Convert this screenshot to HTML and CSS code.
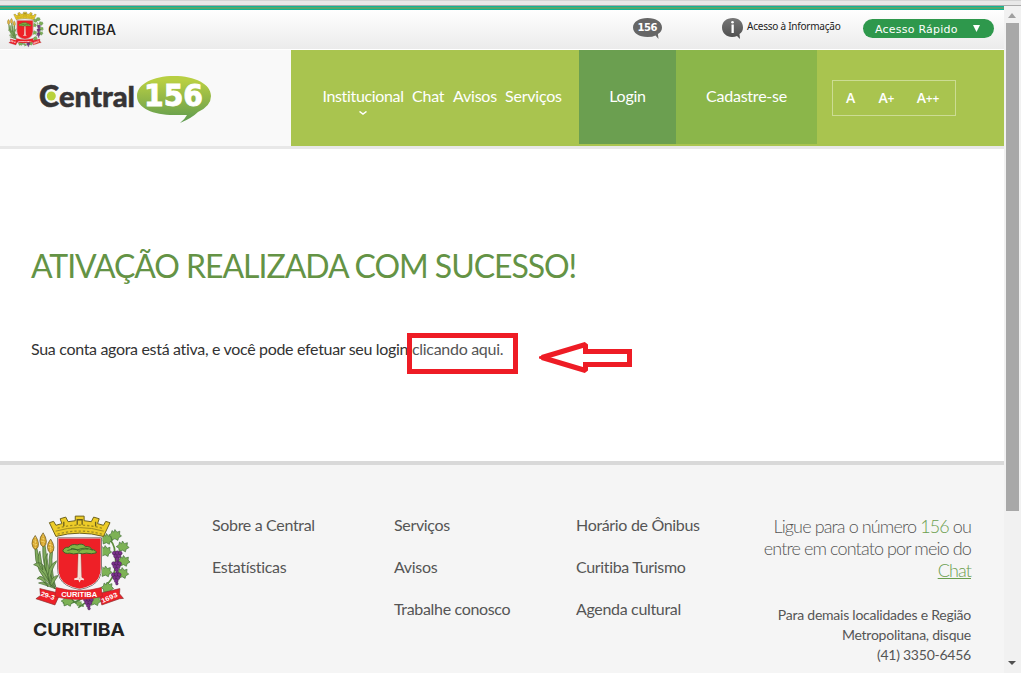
FILE: index.html
```html
<!DOCTYPE html>
<html lang="pt-BR">
<head>
<meta charset="utf-8">
<title>Central 156</title>
<link rel="stylesheet" href="styles.css">
</head>
<body>
<svg class="defs" width="0" height="0" aria-hidden="true">
  <defs>
    <g id="corn"><path d="M0-5Q-11 8-10 20Q-9 34 0 38Q11 34 10 20Q9 8 0-5Z" fill="#d5a42c" stroke="#62562b" stroke-width="2"/><path d="M0 0V34M-5 11L6 15M-7 20L7 24" stroke="#f5d977" stroke-width="3" stroke-dasharray="3 2"/></g>
    <path id="leaf" d="M0-17L6-9L15-12L14-3L20 3L11 8L9 16L0 11L-10 15L-11 5L-19 0L-11-5L-9-14L-3-9Z" fill="#7db255" stroke="#3f6c38" stroke-width="2"/>
    <g id="grapes" fill="#7b318c" stroke="#43204f" stroke-width="1.5"><circle cx="-9" cy="0" r="6"/><circle cx="0" cy="-1" r="6"/><circle cx="9" cy="0" r="6"/><circle cx="-5" cy="9" r="6"/><circle cx="5" cy="9" r="6"/><circle cx="0" cy="18" r="6"/><circle cx="2" cy="27" r="4"/></g>
    <symbol id="crest" viewBox="62 40 305 298">
      <g fill="#82ac5e" stroke="#42652f" stroke-width="2"><path d="M74 145Q71 220 135 268Q91 211 80 145ZM98 135Q93 210 136 267Q111 200 105 135ZM121 150Q108 210 138 264Q121 208 128 150Z"/><path d="M80 237Q98 214 114 262Q95 235 80 237ZM70 194Q103 170 116 243Q92 199 70 194ZM144 180Q103 200 118 252Q120 210 144 180ZM89 153Q74 185 98 210ZM112 160Q96 185 107 212ZM85 250Q105 240 138 268Q105 256 85 250ZM146 226Q120 230 122 262Z"/></g>
      <use href="#corn" x="75" y="110"/><use href="#corn" x="99" y="102"/><use href="#corn" x="122" y="121"/>
      <path d="M285 263Q329 228 318 160Q318 124 292 112" fill="none" stroke="#5c8c3b" stroke-width="5"/>
      <use href="#leaf" x="292" y="116"/><use href="#leaf" x="318" y="104"/><use href="#leaf" x="341" y="139"/><use href="#leaf" x="288" y="153"/><use href="#leaf" x="344" y="183"/><use href="#leaf" x="289" y="215"/><use href="#leaf" x="340" y="220"/><use href="#leaf" x="294" y="264"/>
      <use href="#grapes" x="325" y="159"/><use href="#grapes" x="323" y="191"/><use href="#grapes" x="322" y="225"/>
      <path d="M138 108L118 66L131 62L138 74L156 69L151 54L168 49L175 63L197 60V46H224V60L246 63L253 49L270 54L265 69L283 74L290 62L303 66L283 108Q210 88 138 108Z" fill="#edcc28" stroke="#6b601e" stroke-width="3"/>
      <path d="M137 92Q210 70 284 92" fill="none" stroke="#a08c20" stroke-width="3"/><path d="M143 101Q210 82 278 101M143 83Q210 64 278 83" fill="none" stroke="#a08c20" stroke-width="4" stroke-dasharray="7 6"/><path d="M203 72V57H218V72M162 77V63M259 77V63" fill="none" stroke="#6b601e" stroke-width="4"/>
      <path d="M143 112H277V204Q277 241 249 257Q233 266 210 270Q187 266 171 257Q143 241 143 204Z" fill="#ee2027" stroke="#fff" stroke-width="5"/><path d="M143 112H277V204Q277 241 249 257Q233 266 210 270Q187 266 171 257Q143 241 143 204Z" fill="none" stroke="#45302e" stroke-width="2"/>
      <path d="M206 154h8l3 84q-7-5-14 0Z" fill="#f6ded5" stroke="#863630"/><path d="M194 239l13-4 3 8 5-8 8 5" stroke="#f7ded7" stroke-width="5" fill="none"/>
      <path d="M159 152q4-12 18-11q9-12 26-7q16-7 25 5q16-1 19 9q14 1 14 10q-13 5-30 1q-11 4-23 0q-18 5-28 0q-16 3-21-7Z" fill="#81b545" stroke="#3b6326" stroke-width="3"/>
      <path d="M173 151q16-8 32-2q19-11 45 1M184 145q21 1 24 9q8-10 29-7" fill="none" stroke="#355f27" stroke-width="2.5"/>
      <path d="M159 310Q195 316 221 294M183 297Q200 316 223 321M206 325L248 297" fill="none" stroke="#518641" stroke-width="5"/><use href="#leaf" x="173" y="305"/><use href="#leaf" x="256" y="303"/><use href="#leaf" x="208" y="313" transform="translate(104 156) scale(.5)"/><use href="#grapes" x="237" y="301"/>
      <path d="M89 267L151 282L135 317L77 298L91 288Z" fill="#ed2028" stroke="#862c2d" stroke-width="2"/><path d="M333 267L270 282L278 317L332 298L344 297L332 283Z" fill="#ed2028" stroke="#862c2d" stroke-width="2"/>
      <path d="M139 264Q209 283 276 264L280 291Q210 309 135 292Z" fill="#ed2028" stroke="#ad292c" stroke-width="2"/>
      <g class="crest-lettering"><text x="154" y="293" textLength="110" lengthAdjust="spacingAndGlyphs">CURITIBA</text><text x="90" y="288" textLength="44" lengthAdjust="spacingAndGlyphs" transform="rotate(19 90 288)">29-3</text><text x="280" y="312" textLength="52" lengthAdjust="spacingAndGlyphs" transform="rotate(-24 280 312)">1693</text></g>
    </symbol>
    <linearGradient id="bubble" x1="0" y1="0" x2="0" y2="1"><stop offset=".1" stop-color="#b8cf43"/><stop offset=".5" stop-color="#91b648"/><stop offset="1" stop-color="#5b9a50"/></linearGradient>
    <linearGradient id="grey" x1="0" y1="0" x2="0" y2="1"><stop stop-color="#777"/><stop offset="1" stop-color="#4c4c4c"/></linearGradient>
  </defs>
</svg>
<div class="window">
  <div class="chrome"></div>
  <div class="viewport">
    <div class="page">
      <div class="stripe"></div>
      <div class="topbar">
        <svg class="mini-crest"><use href="#crest"/></svg>
        <svg class="city" width="70" height="18"><text x="0" y="14" textLength="68" lengthAdjust="spacingAndGlyphs">CURITIBA</text></svg>
        <svg class="phone" width="30" height="22" viewBox="0 0 30 22"><path d="M14.5 0C6 0 0 4 0 9.5S6 19 14.5 19q5 0 8-1.5l3 3.5-.6-5Q29 13.500 29 9.500C29 4 23 0 14.500 0Z" fill="#666"/><text x="4.500" y="13" textLength="20">156</text></svg>
        <svg class="info-icon" width="22" height="22" viewBox="0 0 22 22"><path d="M11 0C4 0 0 4 0 9.500S4.500 19 10 19q3 0 5-1l3 3-.5-5Q21 13.500 21 9.500C21 4 17 0 11 0Z" fill="url(#grey)"/><circle cx="10.500" cy="4.300" r="1.300" fill="#fff"/><path d="M9.500 6.500h2.300V15H9.500Z" fill="#fff"/></svg>
        <a class="access">Acesso à Informação</a>
        <button class="quick"><span>Acesso Rápido</span><svg width="8" height="7"><path d="M0 0h7L3.500 7Z" fill="#fff"/></svg></button>
      </div>
      <header class="header">
        <div class="brand">
          <svg class="logo" width="174" height="50" viewBox="0 0 174 50"><text class="logo-c" x="0" y="32" textLength="20" lengthAdjust="spacingAndGlyphs">C</text><circle cx="12.300" cy="21" r="4.500" fill="#b8d13b"/><text class="logo-name" x="20" y="31.500" textLength="76" lengthAdjust="spacingAndGlyphs">entral</text><path d="M135 1C114 1 98 9 98 21s16 19 37 19h13q-2 4-7 8q12-5 18-11q13-6 13-16C172 9 156 1 135 1Z" fill="url(#bubble)"/><text class="logo-number" x="105" y="31" textLength="59" lengthAdjust="spacingAndGlyphs">156</text></svg>
        </div>
        <nav class="menu">
          <a class="institutional">Institucional<svg width="8" height="4"><path d="M.5.500L4 3L7.500.500" fill="none" stroke="#fff" stroke-width="1.500"/></svg></a><a class="chat">Chat</a><a class="notices">Avisos</a><a class="services">Serviços</a>
        </nav>
        <a class="tab login">Login</a><a class="tab signup">Cadastre-se</a>
        <div class="tools"><div class="sizes"><a>A</a><a>A<small>+</small></a><a>A<small>++</small></a></div></div>
      </header>
      <main class="main">
        <h1>ATIVAÇÃO REALIZADA COM SUCESSO!</h1>
        <p><span class="message">Sua conta agora está ativa, e você pode efetuar seu login</span><a class="activate">clicando aqui.</a></p>
        <div class="highlight"></div>
        <svg class="arrow" width="94" height="34" viewBox="0 0 94 34"><path d="M46.500 11.500V3.500L3 16.500L46.500 29.500V23.500" fill="#fff" stroke="#ee1c25" stroke-width="5" stroke-linejoin="bevel"/><path d="M44 10.500H90.500V23.500H44" fill="none" stroke="#ee1c25" stroke-width="5"/><path d="M0 15.500L5 14V19L0 17.500Z" fill="#ee1c25"/></svg>
      </main>
      <footer class="footer">
        <div class="footer-brand"><svg class="crest"><use href="#crest"/></svg><svg class="city-large" width="94" height="22"><text x="1" y="17" textLength="92" lengthAdjust="spacingAndGlyphs">CURITIBA</text></svg></div>
        <div class="links first"><a>Sobre a Central</a><a>Estatísticas</a></div>
        <div class="links second"><a>Serviços</a><a>Avisos</a><a>Trabalhe conosco</a></div>
        <div class="links third"><a>Horário de Ônibus</a><a>Curitiba Turismo</a><a>Agenda cultural</a></div>
        <div class="contact"><div class="call">Ligue para o número <span>156</span> ou<br>entre em contato por meio do<br><a>Chat</a></div><div class="away">Para demais localidades e Região<br>Metropolitana, disque<br>(41) 3350-6456</div></div>
      </footer>
    </div>
    <div class="scrollbar"><svg width="9" height="5"><path d="M0 5L4 0L8 5Z" fill="#a0a0a0"/></svg><div class="thumb"></div><svg class="down" width="9" height="5"><path d="M0 0H8L4 4Z" fill="#505050"/></svg></div>
  </div>
</div>
</body>
</html>
```

FILE: styles.css
```css
* { box-sizing: border-box; }
body { margin: 0; width: 1021px; height: 673px; overflow: hidden; font-family: Lato, sans-serif; font-size: 16px; color: #333; }
.defs { position: absolute; }
.crest-lettering { font: bold 20px "Liberation Sans", sans-serif; fill: #fff; }
.window { display: flex; flex-direction: column; height: 673px; }
.chrome { height: 6px; background: linear-gradient(#d4d4d4 1px, #e8e8e8 1px 5px, #aaa 5px); }
.viewport { display: flex; flex: 1; min-height: 0; }
.page { display: flex; flex-direction: column; width: 1004px; }
.stripe { height: 4px; background: linear-gradient(#10b496 1px, #58a56b 1px 3px, #10b496 3px); }
.topbar { display: flex; align-items: flex-start; height: 40px; border-bottom: 1px solid #fff; background: linear-gradient(#fff, #ebebeb); }
.mini-crest { width: 37px; height: 37px; margin: 1px 0 0 7px; flex: none; }
.city { margin: 11px 0 0 4px; font: 500 14px Inter, sans-serif; fill: #222; }
.phone { margin: 8px 0 0 515px; font: 900 10px "DejaVu Sans", sans-serif; fill: #fff; }
.info-icon { margin: 8px 0 0 59px; }
.access { margin: 9px 0 0 3px; width: 116px; font: 10px/14px "Noto Sans", sans-serif; letter-spacing: -.23px; white-space: nowrap; color: #222; }
.quick { display: flex; align-items: center; width: 131px; height: 19px; margin: 9px 0 0; padding: 1px 13px 0 12px; border: 0; border-radius: 10px; background: #2e984c; color: #fff; font: 11px "DejaVu Sans", sans-serif; letter-spacing: .22px; }
.quick span { width: 98px; text-align: left; }
.quick svg { margin-bottom: 1px; }
.header { display: flex; height: 99px; border-bottom: 3px solid #e8e8e8; background: #a9c44f; color: #fff; letter-spacing: -.22px; }
.brand { width: 291px; background: #f9f9f9; padding: 25px 0 0 39px; letter-spacing: 0; }
.logo-c, .logo-name { font-family: Lato, sans-serif; font-weight: 900; fill: #363435; stroke: #363435; stroke-width: .5px; }
.logo-c { font-size: 31px; }
.logo-name { font-size: 29px; }
.logo-number { font: bold 30px "DejaVu Sans", sans-serif; fill: #fff; stroke: #fff; stroke-width: .9px; }
.menu { display: flex; width: 288px; padding: 36px 0 0 32px; line-height: 20px; }
.menu a { white-space: nowrap; }
.institutional { display: flex; flex-direction: column; align-items: center; gap: 5px; width: 80px; margin-right: 9px; letter-spacing: -.35px; }
.chat { width: 41px; }
.notices { width: 52px; }
.tab { display: flex; justify-content: center; height: 94px; padding-top: 36px; line-height: 20px; }
.login { width: 97px; background: #6b9f50; }
.signup { width: 141px; background: #8bb64a; }
.tools { padding: 30px 0 0 15px; }
.sizes { display: flex; align-items: center; width: 124px; height: 36px; padding: 0 0 2px 13px; border: 1px solid #ccdc93; font: 600 14px "Open Sans", sans-serif; }
.sizes a { width: 34px; }
.sizes a + a { width: 40px; }
.sizes small { font-size: 12px; }
.main { position: relative; height: 312px; padding: 94px 31px 0; background: #fff; }
h1 { margin: 0; color: #649345; font-size: 32px; line-height: 46px; font-weight: 400; letter-spacing: -1.05px; white-space: nowrap; }
p { display: flex; margin: 48px 0 0; line-height: 24px; white-space: nowrap; }
.message { width: 381px; letter-spacing: -.32px; }
.activate { color: #555; letter-spacing: -.3px; }
.highlight { position: absolute; left: 407px; top: 184px; width: 111px; height: 41px; border: 5px solid #ee1c25; }
.arrow { position: absolute; left: 539px; top: 192px; }
.footer { display: flex; flex: 1; border-top: 4px solid #d9d9d9; background: #f5f5f5; color: #555; }
.footer-brand { display: flex; flex-direction: column; width: 212px; padding: 49px 0 0 31px; }
.crest { width: 100px; height: 98px; }
.city-large { margin: 7px 0 0 1px; font: 650 18px Inter, sans-serif; fill: #222; }
.links { display: flex; flex-direction: column; gap: 18px; padding-top: 48px; width: 182px; line-height: 24px; letter-spacing: -.33px; white-space: nowrap; }
.contact { display: flex; flex-direction: column; align-items: flex-end; width: 213px; padding-top: 50px; text-align: right; white-space: nowrap; }
.call { font: 300 18px/22px Lato, sans-serif; letter-spacing: -.88px; }
.call span, .call a { color: #6b9f50; }
.call a { text-decoration: underline; }
.away { margin-top: 24px; font-size: 14px; line-height: 20px; letter-spacing: -.24px; }
.scrollbar { display: flex; flex-direction: column; align-items: center; width: 17px; padding-top: 7px; background: #f1f1f1; }
.thumb { width: 13px; height: 488px; margin-top: 5px; background: #a8a8a8; }
.down { margin: auto 0 7px; }
```
